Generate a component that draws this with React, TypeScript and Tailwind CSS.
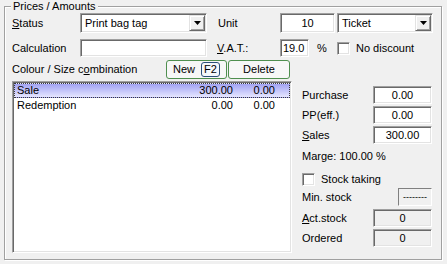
import React from 'react';

const sunken =
  'border border-t-[#a0a0a0] border-l-[#a0a0a0] border-b-white border-r-white shadow-[inset_1px_1px_0_#696969,inset_-1px_-1px_0_#e3e3e3]';
const raised =
  'border border-t-[#e3e3e3] border-l-[#e3e3e3] border-b-[#696969] border-r-[#696969] shadow-[inset_1px_1px_0_#ffffff,inset_-1px_-1px_0_#a0a0a0]';

const Arrow = () => (
  <svg width="7" height="4" viewBox="0 0 7 4">
    <path d="M0 0h7L3.5 4z" fill="#000" />
  </svg>
);

const Combo = ({ value, className }: { value: string; className: string }) => (
  <div className={`${sunken} ${className} h-[20px] bg-white flex items-center p-[1px]`}>
    <span className="flex-1 pl-[3px] leading-none">{value}</span>
    <span className={`${raised} w-[16px] h-[16px] bg-[#f0f0f0] flex items-center justify-center`}>
      <Arrow />
    </span>
  </div>
);

const Field = ({ value, className, gray }: { value?: string; className: string; gray?: boolean }) => (
  <div
    className={`${sunken} ${className} ${gray ? 'bg-[#f0f0f0]' : 'bg-white'} h-[18px] flex items-center justify-center leading-none`}
  >
    {value}
  </div>
);

const Check = () => <span className={`${sunken} w-[13px] h-[13px] bg-white shrink-0`} />;

const rows = [
  { name: 'Sale', a: '300.00', b: '0.00', sel: true },
  { name: 'Redemption', a: '0.00', b: '0.00', sel: false },
];

export default function App() {
  return (
    <div className="w-[447px] h-[264px] bg-[#f0f0f0] text-black text-[11px] font-['Liberation_Sans',Arial,sans-serif] pt-[6px] pl-[4px] overflow-hidden">
      <div className="relative w-[438px] h-[254px] border border-[#a0a0a0] shadow-[inset_1px_1px_0_#ffffff,1px_1px_0_#ffffff] pl-[7px] pt-[6px]">
        <div className="absolute left-[6px] top-[-8px] px-[2px] bg-[#f0f0f0] leading-[14px]">Prices / Amounts</div>

        <div className="flex items-center h-[20px]">
          <span className="w-[68px]">
            <span className="underline">S</span>tatus
          </span>
          <Combo value="Print bag tag" className="w-[127px]" />
          <span className="ml-[11px] w-[62px]">Unit</span>
          <Field value="10" className="w-[55px] h-[20px]" />
          <Combo value="Ticket" className="ml-[2px] w-[96px]" />
        </div>

        <div className="flex items-center h-[18px] mt-[6px]">
          <span className="w-[68px]">Calculation</span>
          <Field className="w-[127px]" />
          <span className="ml-[10px] w-[63px]">
            <span className="underline">V</span>.A.T.:
          </span>
          <Field value="19.0" className="w-[29px] justify-start pl-[2px]" />
          <span className="w-[28px] pl-[8px]">%</span>
          <Check />
          <span className="ml-[6px]">No discount</span>
        </div>

        <div className="flex items-center h-[19px] mt-[3px]">
          <span className="w-[154px]">
            Colour / Size c<span className="underline">o</span>mbination
          </span>
          <button className="w-[61px] h-[19px] rounded-[3px] border border-[#4f8f4f] bg-[#f7f7f7] flex items-center justify-center gap-[6px]">
            New
            <span className="h-[15px] px-[2px] rounded-[3px] border border-[#2b4f7a] bg-[#f4f8fc] leading-[13px]">F2</span>
          </button>
          <button className="ml-[1px] w-[62px] h-[19px] rounded-[3px] border border-[#4f8f4f] bg-[#f7f7f7]">
            Delete
          </button>
        </div>

        <div className="flex mt-[2px]">
          <div className={`${sunken} w-[280px] h-[172px] bg-white p-[1px]`}>
            {rows.map((r) => (
              <div
                key={r.name}
                className={`flex items-center h-[15px] pl-[2px] pr-[14px] leading-none ${
                  r.sel
                    ? 'bg-linear-to-b from-[#a2a2f2] to-[#e6e6ff] border border-dotted border-[#3a3a3a]'
                    : 'border border-transparent'
                }`}
              >
                <span className="flex-1">{r.name}</span>
                <span className="w-[60px] text-right">{r.a}</span>
                <span className="w-[42px] text-right">{r.b}</span>
              </div>
            ))}
          </div>

          <div className="ml-[10px] w-[131px] flex flex-col">
            <div className="flex items-center mt-[5px]">
              <span className="w-[71px]">Purchase</span>
              <Field value="0.00" className="w-[59px]" />
            </div>
            <div className="flex items-center mt-[2px]">
              <span className="w-[71px]">PP(eff.)</span>
              <Field value="0.00" className="w-[59px]" />
            </div>
            <div className="flex items-center mt-[2px]">
              <span className="w-[71px]">
                <span className="underline">S</span>ales
              </span>
              <Field value="300.00" className="w-[59px]" />
            </div>
            <div className="h-[16px] mt-[4px] flex items-center">Marge: 100.00 %</div>
            <div className="flex items-center h-[14px] mt-[8px]">
              <Check />
              <span className="ml-[6px]">Stock taking</span>
            </div>
            <div className="flex items-center justify-between mt-[2px] h-[18px]">
              <span>Min. stock</span>
              <div className="w-[34px] h-[18px] mr-[1px] border border-t-[#808080] border-l-[#808080] border-b-white border-r-white bg-[#f0f0f0] flex items-center justify-center text-[9px] leading-none">
                --------
              </div>
            </div>
            <div className="flex items-center mt-[3px]">
              <span className="w-[71px]">
                <span className="underline">A</span>ct.stock
              </span>
              <Field value="0" gray className="w-[59px]" />
            </div>
            <div className="flex items-center mt-[2px]">
              <span className="w-[71px]">Ordered</span>
              <Field value="0" gray className="w-[59px]" />
            </div>
          </div>
        </div>
      </div>
    </div>
  );
}
